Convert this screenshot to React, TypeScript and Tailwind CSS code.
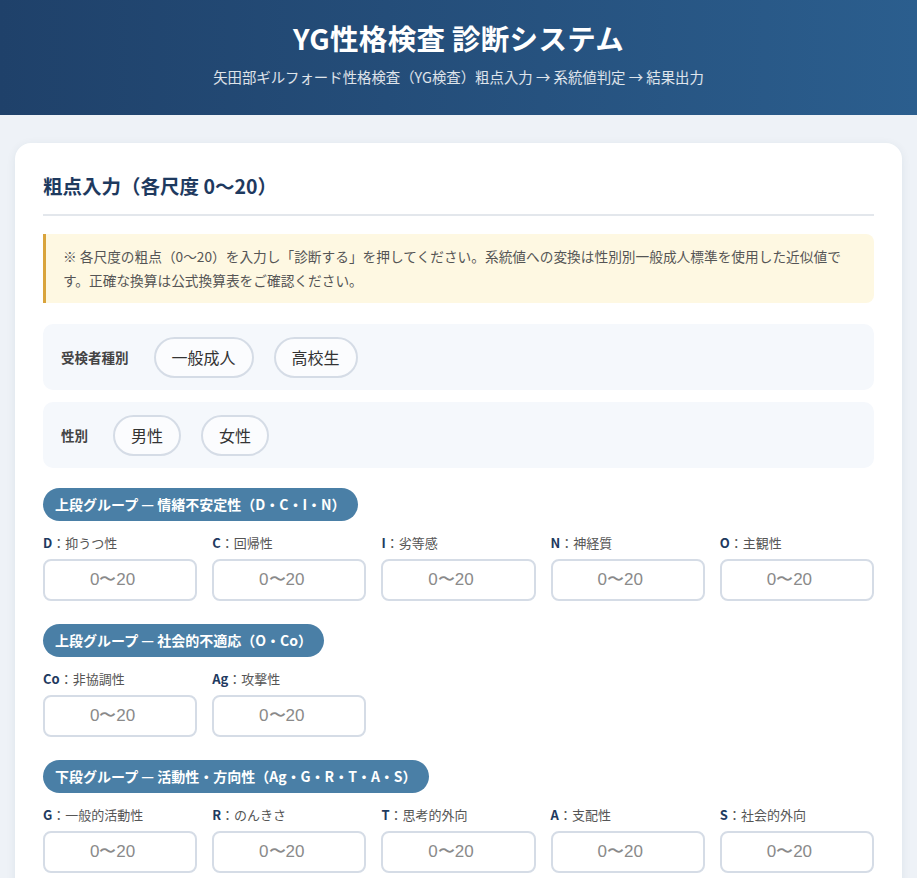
import React from 'react';

const jp = { fontFamily: '"Noto Sans CJK JP", "Noto Sans", sans-serif' };

type Scale = { code: string; name: string };

const groups: { title: string; scales: Scale[] }[] = [
  {
    title: '上段グループ — 情緒不安定性（D・C・I・N）',
    scales: [
      { code: 'D', name: '抑うつ性' },
      { code: 'C', name: '回帰性' },
      { code: 'I', name: '劣等感' },
      { code: 'N', name: '神経質' },
      { code: 'O', name: '主観性' },
    ],
  },
  {
    title: '上段グループ — 社会的不適応（O・Co）',
    scales: [
      { code: 'Co', name: '非協調性' },
      { code: 'Ag', name: '攻撃性' },
    ],
  },
  {
    title: '下段グループ — 活動性・方向性（Ag・G・R・T・A・S）',
    scales: [
      { code: 'G', name: '一般的活動性' },
      { code: 'R', name: 'のんきさ' },
      { code: 'T', name: '思考的外向' },
      { code: 'A', name: '支配性' },
      { code: 'S', name: '社会的外向' },
    ],
  },
];

function Pill({ children }: { children: React.ReactNode }) {
  return (
    <button className="h-[41px] rounded-full border-2 border-[#d5dce6] bg-white/60 px-4 text-[16px] text-[#333]">
      {children}
    </button>
  );
}

function OptionRow({ label, options }: { label: string; options: string[] }) {
  return (
    <div className="flex h-[66px] items-center rounded-[10px] bg-[#f5f8fc] px-[18px]">
      <span className="mr-[25px] text-[13.5px] font-bold text-[#444]">{label}</span>
      <div className="flex gap-5">
        {options.map((o) => (
          <Pill key={o}>{o}</Pill>
        ))}
      </div>
    </div>
  );
}

export default function App() {
  return (
    <div className="min-h-screen bg-[#eef2f7]" style={jp}>
      <header className="flex h-[115px] flex-col items-center bg-gradient-to-r from-[#1f416a] to-[#2b5e8e] pt-[19px] text-white">
        <h1 className="text-[28.5px] font-bold leading-[38px] tracking-[0.3px]">YG性格検査 診断システム</h1>
        <p className="mt-[10px] text-[14.4px] leading-[20px] text-white/85">
          矢田部ギルフォード性格検査（YG検査）粗点入力 → 系統値判定 → 結果出力
        </p>
      </header>

      <main className="px-[15px] pt-[28px]">
        <section className="rounded-[16px] bg-white px-[28px] pb-6 pt-[29px] shadow-[0_2px_10px_rgba(30,58,95,0.08)]">
          <h2 className="border-b-2 border-[#e3e7ec] pb-[14px] text-[19.5px] font-bold leading-[28px] text-[#1e3a5f]">
            粗点入力（各尺度 0〜20）
          </h2>

          <div className="mt-[18px] rounded-r-[8px] border-l-[3px] border-[#d9a43c] bg-[#fef8e2] pb-[11px] pl-[17px] pr-6 pt-[10px] text-[13.7px] leading-[24px] text-[#555]">
            ※ 各尺度の粗点（0〜20）を入力し「診断する」を押してください。系統値への変換は性別別一般成人標準を使用した近似値です。正確な換算は公式換算表をご確認ください。
          </div>

          <div className="mt-[21px] flex flex-col gap-3">
            <OptionRow label="受検者種別" options={['一般成人', '高校生']} />
            <OptionRow label="性別" options={['男性', '女性']} />
          </div>

          {groups.map((g, i) => (
            <div key={g.title} className={i === 0 ? 'mt-5' : 'mt-[23px]'}>
              <div className="inline-flex h-[33px] items-center rounded-full bg-[#4a7fa6] px-3 text-[14px] font-bold text-white">
                {g.title}
              </div>
              <div className="mt-[12px] grid grid-cols-5 gap-x-[15px]">
                {g.scales.map((s) => (
                  <label key={s.code} className="flex flex-col">
                    <span className="text-[13px] leading-[20px] text-[#555]">
                      <b className="text-[#1e3a5f]">{s.code}</b>：{s.name}
                    </span>
                    <input
                      type="number"
                      min={0}
                      max={20}
                      placeholder="0〜20"
                      className="mt-[6px] h-[42px] w-full rounded-[8px] border-2 border-[#d5dce6] text-center text-[17px] text-[#333] placeholder:text-[#8a8a8a]"
                      style={{ fontFamily: '"Liberation Sans", Arial, sans-serif' }}
                    />
                  </label>
                ))}
              </div>
            </div>
          ))}
        </section>
      </main>
    </div>
  );
}
